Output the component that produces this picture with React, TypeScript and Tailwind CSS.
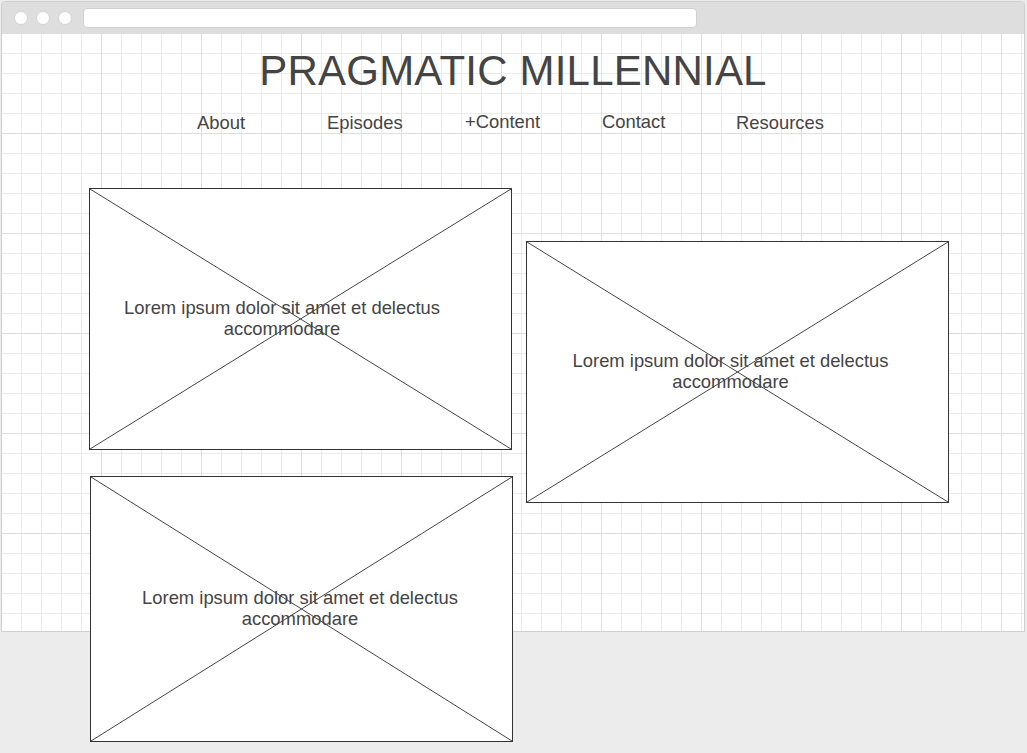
const navItems = [
  { label: "About", cls: "w-[130px]" },
  { label: "Episodes", cls: "w-[138px]" },
  { label: "+Content", cls: "w-[137px] -mt-px" },
  { label: "Contact", cls: "w-[134px] -mt-px" },
  { label: "Resources", cls: "w-[100px]" },
];

function Placeholder({ className, textCls }: { className: string; textCls: string }) {
  return (
    <div className={`relative shrink-0 border border-[#333] bg-white ${className}`}>
      <svg className="absolute inset-0 h-full w-full" viewBox="0 0 100 100" preserveAspectRatio="none">
        <line x1="0" y1="0" x2="100" y2="100" stroke="#444" strokeWidth={1} vectorEffect="non-scaling-stroke" />
        <line x1="100" y1="0" x2="0" y2="100" stroke="#444" strokeWidth={1} vectorEffect="non-scaling-stroke" />
      </svg>
      <div className={`relative flex h-full items-center justify-center pb-[2px] text-center text-[18.4px] leading-[21px] text-[#444] ${textCls}`}>
        <p>
          Lorem ipsum dolor sit amet et delectus
          <br />
          accommodare
        </p>
      </div>
    </div>
  );
}

export default function App() {
  return (
    <div className="h-[753px] w-[1027px] overflow-hidden bg-[#ececec] pl-px pt-px font-['Liberation_Sans',Arial,sans-serif]">
      <div className="flex h-[631px] w-[1024px] flex-col rounded-t-[4px] border border-[#cfcfcf]">
        {/* browser chrome */}
        <div className="flex h-[31px] shrink-0 items-center rounded-t-[3px] bg-[#dedede] pl-[12px]">
          <span className="h-[14px] w-[14px] rounded-full border border-[#d4d4d4] bg-white" />
          <span className="ml-[8px] h-[14px] w-[14px] rounded-full border border-[#d4d4d4] bg-white" />
          <span className="ml-[8px] h-[14px] w-[14px] rounded-full border border-[#d4d4d4] bg-white" />
          <div className="ml-[11px] h-[20px] w-[614px] rounded-[4px] border border-[#d0d0d0] bg-white" />
        </div>

        {/* page canvas */}
        <div className="h-[598px] bg-white bg-[linear-gradient(to_right,#dedede_1px,transparent_1px),linear-gradient(to_bottom,#dedede_1px,transparent_1px),linear-gradient(to_right,#ebebeb_1px,transparent_1px),linear-gradient(to_bottom,#ebebeb_1px,transparent_1px)] bg-[size:100px_100px,100px_100px,20px_20px,20px_20px] bg-[position:-1px_0] pt-[14px]">
          <h1 className="text-center text-[42px] leading-[48px] tracking-[0.2px] text-[#444]">PRAGMATIC MILLENNIAL</h1>

          <nav className="mt-[17px] flex items-start pl-[195px] text-[18.4px] leading-[21px] text-[#444]">
            {navItems.map((n) => (
              <span key={n.label} className={`shrink-0 ${n.cls}`}>
                {n.label}
              </span>
            ))}
          </nav>

          <div className="mt-[55px] flex items-start pl-[87px]">
            <div className="flex flex-col">
              <Placeholder className="h-[262px] w-[423px]" textCls="pr-[37px]" />
              <Placeholder className="ml-px mt-[26px] h-[266px] w-[423px]" textCls="pr-[3px]" />
            </div>
            <Placeholder className="ml-[13px] mt-[53px] h-[262px] w-[423px]" textCls="pr-[14px]" />
          </div>
        </div>
      </div>
    </div>
  );
}
